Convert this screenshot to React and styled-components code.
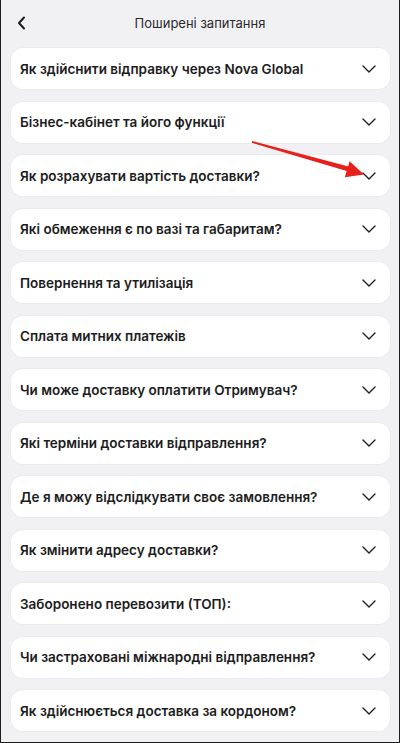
import React from "react";
import styled, { createGlobalStyle } from "styled-components";

const questions = [
    "Як здійснити відправку через Nova Global",
    "Бізнес-кабінет та його функції",
    "Як розрахувати вартість доставки?",
    "Які обмеження є по вазі та габаритам?",
    "Повернення та утилізація",
    "Сплата митних платежів",
    "Чи може доставку оплатити Отримувач?",
    "Які терміни доставки відправлення?",
    "Де я можу відслідкувати своє замовлення?",
    "Як змінити адресу доставки?",
    "Заборонено перевозити (ТОП):",
    "Чи застраховані міжнародні відправлення?",
    "Як здійснюється доставка за кордоном?",
];

export default function App(){
    return(
        <>
            <GlobalStyle/>
            <Screen>
                <Header>
                    <BackButton aria-label="Назад">
                        <svg width="10" height="14" viewBox="0 0 10 14">
                            <path d="M7 1.5 L2 7 L7 12.5" fill="none" stroke="#1c1c1c" strokeWidth="2" strokeLinecap="round" strokeLinejoin="round"/>
                        </svg>
                    </BackButton>
                    <Title>Поширені запитання</Title>
                </Header>
                <List>
                    {questions.map(q => (
                        <Card key={q}>
                            <Question>{q}</Question>
                            <Chevron width="14" height="8" viewBox="0 0 14 8">
                                <path d="M1 1 L7 7 L13 1" fill="none" stroke="#1e1e1e" strokeWidth="1.4" strokeLinecap="round" strokeLinejoin="round"/>
                            </Chevron>
                        </Card>
                    ))}
                </List>
                {/* red pointer arrow drawn over the list */}
                <Annotation width="400" height="743" viewBox="0 0 400 743">
                    <polygon points="252.3,141 349.5,166.8 348.4,171.4 251.7,142.8" fill="#e8201c"/>
                    <polygon points="364,174.5 344.8,177.2 349.6,161.2" fill="#e8201c"/>
                </Annotation>
            </Screen>
        </>
    )
}

const GlobalStyle = createGlobalStyle`
    html, body {
        margin:0;
        padding:0;
        background:#f1f1f3;
    }
    *{
        box-sizing:border-box;
    }
`

const Screen = styled.div`
    position:relative;
    width:400px;
    height:743px;
    background:#f1f1f3;
    border:1px solid #1b1b1b;
    border-top:none;
    font-family:Inter, "Noto Sans", sans-serif;
    overflow:hidden;
`

const Header = styled.div`
    position:relative;
    height:48px;
    display:flex;
    align-items:center;
    justify-content:center;
`

const BackButton = styled.button`
    position:absolute;
    left:14px;
    top:15px;
    width:14px;
    height:16px;
    padding:0;
    border:none;
    background:none;
    display:flex;
    align-items:center;
    justify-content:center;
`

const Title = styled.div`
    font-size:13px;
    color:#2a2a2a;
    margin-top:-3px;
`

const List = styled.div`
    display:flex;
    flex-direction:column;
    gap:12.5px;
    padding:0 9px 0 10px;
`

const Card = styled.div`
    height:41px;
    background:#fff;
    border-radius:12px;
    box-shadow:0 0 0 1px #ebebed;
    display:flex;
    align-items:center;
    justify-content:space-between;
    padding:0 14px 0 9px;
`

const Question = styled.span`
    font-size:13.5px;
    font-weight:600;
    color:#1c1c1c;
`

const Chevron = styled.svg`
    flex:none;
`

const Annotation = styled.svg`
    position:absolute;
    left:-1px;
    top:0;
    pointer-events:none;
`
